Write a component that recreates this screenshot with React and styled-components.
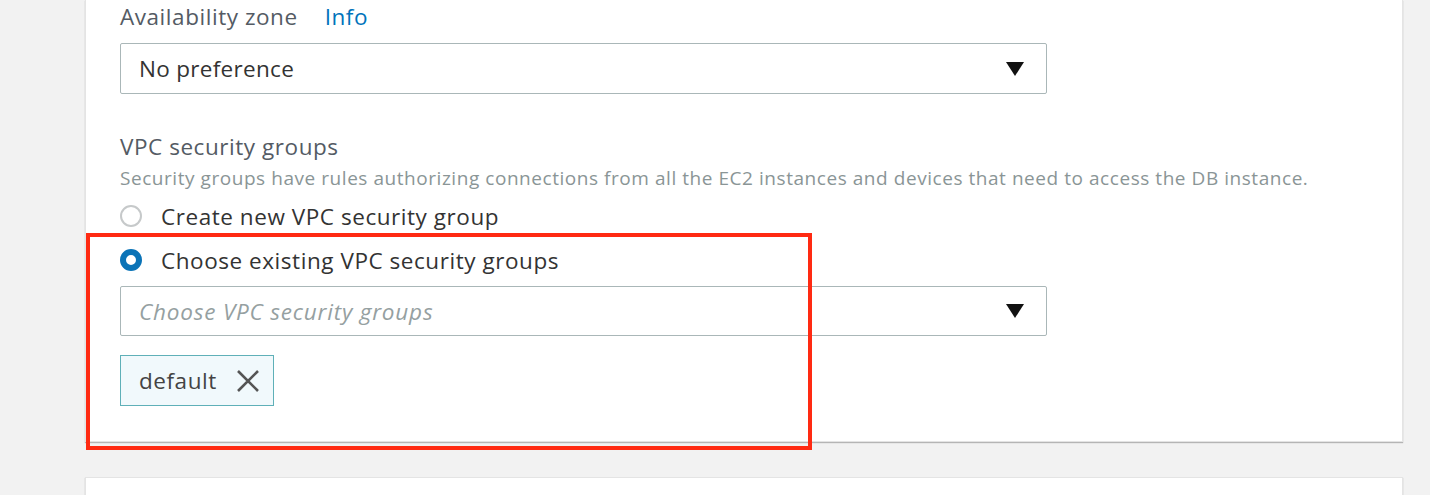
import React from "react"
import styled, { createGlobalStyle } from "styled-components"

const GlobalStyle = createGlobalStyle`
  html, body {
    margin: 0;
    padding: 0;
    background: #f2f2f2;
    font-family: "Open Sans", "Noto Sans", sans-serif;
    letter-spacing: 0.55px;
  }
`

const Page = styled.div`
  position: relative;
  width: 1430px;
  height: 495px;
  overflow: hidden;
  background: #f2f2f2;
`

const Card = styled.section`
  margin-left: 85px;
  width: 1318px;
  box-sizing: border-box;
  background: #fff;
  border: 1px solid #e4e4e4;
  border-top: none;
  box-shadow: 0 1px 1px rgba(0, 0, 0, 0.25);
  padding: 4px 34px 35px 34px;
`

const NextCard = styled(Card)`
  margin-top: 35px;
  height: 60px;
  padding: 0;
  border-top: 1px solid #e4e4e4;
`

const LabelRow = styled.div`
  display: flex;
  align-items: center;
  gap: 27px;
  height: 24px;
  font-size: 22.5px;
  color: #545b64;
`

const InfoLink = styled.a`
  color: #0073bb;
  text-decoration: none;
`

const Select = styled.div`
  display: flex;
  align-items: center;
  justify-content: space-between;
  width: 927px;
  height: ${({ $h }) => $h}px;
  box-sizing: border-box;
  margin-top: ${({ $mt }) => $mt}px;
  padding: 0 22px 0 18px;
  border: 1px solid #aab7b8;
  border-radius: 2px;
  font-size: 22.5px;
  color: ${({ $placeholder }) => ($placeholder ? "#95a0a1" : "#333")};
  font-style: ${({ $placeholder }) => ($placeholder ? "italic" : "normal")};
  letter-spacing: ${({ $placeholder }) => ($placeholder ? "0.8px" : "0.3px")};
`

const Caret = styled.span`
  width: 0;
  height: 0;
  border-left: 9px solid transparent;
  border-right: 9px solid transparent;
  border-top: 14px solid #111;
`

const GroupTitle = styled.div`
  margin-top: 41px;
  height: 24px;
  line-height: 24px;
  font-size: 22.5px;
  color: #545b64;
`

const Description = styled.div`
  margin-top: 9px;
  height: 20px;
  line-height: 20px;
  font-size: 19px;
  color: #8a9596;
  white-space: nowrap;
`

const RadioRow = styled.label`
  display: flex;
  align-items: center;
  gap: 19px;
  height: 28px;
  margin-top: ${({ $mt }) => $mt}px;
  font-size: 22.5px;
  color: #333;
`

const RadioDot = styled.span`
  width: 22px;
  height: 22px;
  box-sizing: border-box;
  border-radius: 50%;
  background: #fff;
  border: ${({ $checked }) => ($checked ? "6px solid #0a73b7" : "2px solid #c6c9ca")};
`

const Token = styled.div`
  display: inline-flex;
  align-items: center;
  gap: 18px;
  margin-top: 19px;
  height: 51px;
  box-sizing: border-box;
  padding: 0 12px 0 18px;
  background: #f1f9fc;
  border: 1px solid #5fb0b8;
  font-size: 22.5px;
  color: #444;
`

const CloseIcon = () => (
  <svg width="26" height="26" viewBox="0 0 26 26">
    <path d="M3 3 L23 23 M23 3 L3 23" stroke="#555" strokeWidth="2.6" fill="none" />
  </svg>
)

const Highlight = styled.div`
  position: absolute;
  left: 86px;
  top: 233px;
  width: 726px;
  height: 217px;
  box-sizing: border-box;
  border: 4px solid #ff2a12;
  pointer-events: none;
`

export default function App() {
  return (
    <Page>
      <GlobalStyle />
      <Card>
        <LabelRow>
          Availability zone <InfoLink>Info</InfoLink>
        </LabelRow>
        <Select $h={51} $mt={15}>
          No preference <Caret />
        </Select>

        <GroupTitle>VPC security groups</GroupTitle>
        <Description>
          Security groups have rules authorizing connections from all the EC2 instances and devices that need to access the DB instance.
        </Description>
        <RadioRow $mt={14}>
          <RadioDot /> Create new VPC security group
        </RadioRow>
        <RadioRow $mt={16}>
          <RadioDot $checked /> Choose existing VPC security groups
        </RadioRow>
        <Select $h={50} $mt={12} $placeholder>
          Choose VPC security groups <Caret />
        </Select>
        <Token>
          default <CloseIcon />
        </Token>
      </Card>
      <NextCard />
      <Highlight />
    </Page>
  )
}
